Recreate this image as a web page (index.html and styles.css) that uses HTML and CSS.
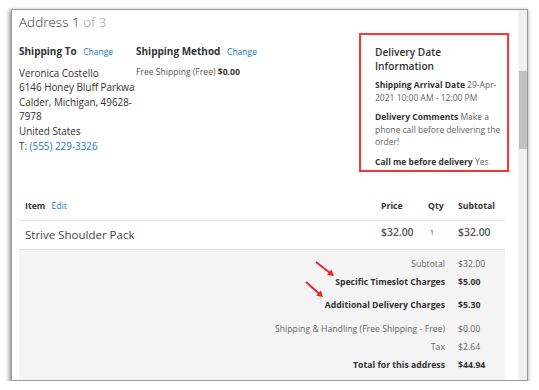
FILE: index.html
```html
<!DOCTYPE html>
<html lang="en">
<head>
    <meta charset="UTF-8">
    <meta name="viewport" content="width=device-width, initial-scale=1.0">
    <title>Multishipping Address</title>
    <link rel="stylesheet" href="styles.css">
</head>
<body>
    <div class="window">
        <div class="page">
            <h1 class="title">Address 1 <span class="count">of 3</span></h1>

            <div class="blocks">
                <div class="block block-address">
                    <div class="block-title">Shipping To <a href="#">Change</a></div>
                    <address>
                        Veronica Costello<br>
                        <span class="nowrap">6146 Honey Bluff Parkway</span><br>
                        Calder, Michigan, 49628-7978<br>
                        United States<br>
                        T: <a href="#">(555) 229-3326</a>
                    </address>
                </div>
                <div class="block block-method">
                    <div class="block-title">Shipping Method <a href="#">Change</a></div>
                    <div class="method-text">Free Shipping (Free) <b>$0.00</b></div>
                </div>
                <div class="delivery">
                    <h3>Delivery Date<br>Information</h3>
                    <p><b>Shipping Arrival Date</b> 29-Apr-2021 10:00 AM - 12:00 PM</p>
                    <p><b>Delivery Comments</b> Make a phone call before delivering the order!</p>
                    <p><b>Call me before delivery</b> Yes</p>
                </div>
            </div>

            <div class="items">
                <div class="items-head">
                    <div>Item <a href="#">Edit</a></div>
                    <div>Price</div>
                    <div>Qty</div>
                    <div>Subtotal</div>
                </div>
                <div class="item-row">
                    <div class="item-name">Strive Shoulder Pack</div>
                    <div class="item-price">$32.00</div>
                    <div class="item-qty">1</div>
                    <div class="item-price">$32.00</div>
                </div>
            </div>

            <div class="totals">
                <div class="totals-row"><span>Subtotal</span><span>$32.00</span></div>
                <div class="totals-row charge"><span>Specific Timeslot Charges</span><span>$5.00</span></div>
                <div class="totals-row charge wide"><span>Additional Delivery Charges</span><span>$5.30</span></div>
                <div class="totals-row"><span>Shipping &amp; Handling (Free Shipping - Free)</span><span>$0.00</span></div>
                <div class="totals-row"><span>Tax</span><span>$2.64</span></div>
                <div class="totals-row grand"><span>Total for this address</span><span>$44.94</span></div>

                <!-- callout arrows on the new charge rows -->
                <svg class="arrows" width="50" height="50" viewBox="0 0 50 50">
                    <line x1="17" y1="7" x2="31" y2="18" stroke="#e8262a" stroke-width="2"/>
                    <polygon points="35,21 28.1,20.1 32.4,14.6" fill="#e8262a"/>
                    <line x1="7" y1="27" x2="20.5" y2="38.9" stroke="#e8262a" stroke-width="2"/>
                    <polygon points="24,42 17.2,40.7 21.8,35.4" fill="#e8262a"/>
                </svg>
            </div>
        </div>
        <div class="scrollbar"><div class="thumb"></div></div>
    </div>
</body>
</html>
```

FILE: styles.css
```css
/* General Styles */
body {
    margin: 0;
    background-color: #fff;
    font-family: "Open Sans", "Liberation Sans", sans-serif;
    color: #333;
}

a {
    color: #1979c3;
    text-decoration: none;
}

.window {
    box-sizing: border-box;
    width: 517px;
    height: 372px;
    margin: 9px 0 0 11px;
    border: 1px solid #999;
    box-shadow: -1px 2px 4px 1px rgba(0, 0, 0, 0.4);
    background-color: #fff;
    display: flex;
    overflow: hidden;
}

.page {
    flex: 1;
    min-width: 0;
    padding: 3px 13px 0 7px;
}

/* Scrollbar */
.scrollbar {
    width: 9px;
    background-color: #f1f1f1;
    display: flex;
    flex-direction: column;
}

.thumb {
    margin: 61px 0 0 1px;
    height: 78px;
    background-color: #c1c1c1;
}

/* Heading */
.title {
    margin: 0;
    font-size: 13.5px;
    font-weight: 300;
    line-height: 18px;
    color: #333;
}

.title .count {
    color: #999;
}

/* Address / method / delivery blocks */
.blocks {
    display: flex;
    margin-top: 2px;
}

.block {
    padding-top: 11px;
}

.block-address {
    width: 116px;
    margin-right: 1px;
    overflow: hidden;
}

.block-method {
    flex: 1;
}

.block-title {
    font-size: 10px;
    font-weight: 700;
    line-height: 14px;
    margin-bottom: 6.6px;
    white-space: nowrap;
}

.block-title a {
    font-size: 8.5px;
    font-weight: 400;
    margin-left: 4px;
}

address {
    font-style: normal;
    font-size: 9.9px;
    line-height: 14.6px;
}

.nowrap {
    white-space: nowrap;
}

.method-text {
    margin-top: 1.4px;
    font-size: 8.6px;
    line-height: 12px;
    color: #555;
}

.method-text b {
    color: #333;
}

.delivery {
    box-sizing: border-box;
    width: 150px;
    margin-right: -4px;
    align-self: flex-start;
    border: 2px solid #f33;
    padding: 9.6px 3px 1.5px 14px;
}

.delivery h3 {
    margin: 0 0 6.7px;
    font-size: 10.2px;
    font-weight: 600;
    line-height: 14px;
}

.delivery p {
    margin: 0 0 6.4px;
    font-size: 8.5px;
    line-height: 12.7px;
    color: #666;
}

.delivery p:last-child {
    margin-bottom: 0;
}

.delivery p b {
    color: #333;
}

/* Items table */
.items {
    margin-top: 28.2px;
}

.items-head,
.item-row {
    display: grid;
    grid-template-columns: 1fr 47px 30px 47px;
    padding-left: 6px;
    border-bottom: 1px solid #e3e3e3;
}

.items-head {
    font-size: 8.7px;
    font-weight: 700;
    line-height: 12px;
    padding-bottom: 8px;
}

.items-head a {
    font-weight: 400;
    font-size: 8.5px;
    margin-left: 4px;
}

.item-row {
    padding-top: 6px;
    padding-bottom: 6.5px;
    align-items: start;
}

.item-name {
    font-size: 11.5px;
    line-height: 16px;
    color: #444;
}

.item-price {
    font-size: 10.4px;
    font-weight: 600;
    line-height: 10px;
    color: #555;
}

.item-qty {
    font-size: 7px;
    line-height: 10px;
    padding-top: 1.3px;
    padding-left: 2px;
    color: #333;
}

/* Totals */
.totals {
    position: relative;
    background-color: #f4f4f4;
    padding: 5.5px 0 10px;
}

.totals-row {
    display: grid;
    grid-template-columns: 1fr 47px;
    column-gap: 13px;
    font-size: 8.7px;
    line-height: 17px;
    padding-bottom: 1px;
    color: #666;
}

.totals-row span:first-child {
    text-align: right;
}

.totals-row.charge {
    font-weight: 700;
    color: #333;
    padding-bottom: 5.7px;
}

.totals-row.wide {
    padding-bottom: 7.3px;
}

.totals-row.grand {
    font-weight: 700;
    color: #333;
}

.arrows {
    position: absolute;
    left: 280px;
    top: 5px;
}
```
